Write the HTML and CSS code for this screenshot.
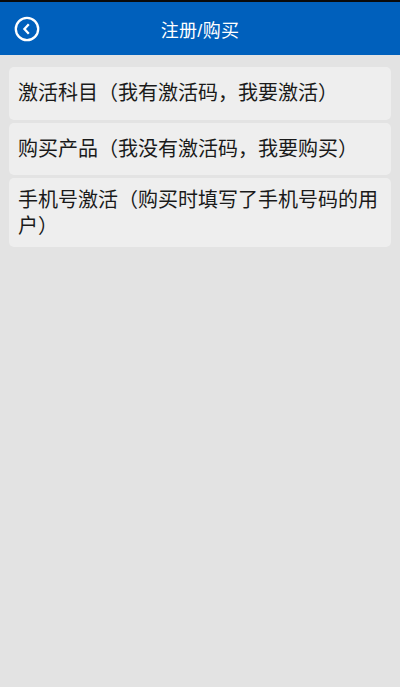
FILE: index.html
```html
<!DOCTYPE html>
<html lang="zh-CN">
<head>
    <meta charset="UTF-8">
    <title>注册/购买</title>

    <link rel="stylesheet" href="styles.css">

</head>
<body>

<div class="header">
    <div class="back">
        <svg width="26" height="26" viewBox="0 0 26 26">
            <circle cx="13" cy="13" r="11.2" fill="none" stroke="#fff" stroke-width="2.3"/>
            <path d="M14.8 8.2 L10.4 13 L14.8 17.8" fill="none" stroke="#fff" stroke-width="2.3"/>
        </svg>
    </div>
    <div class="title">注册/购买</div>
</div>

<div class="list">
    <div class="item">激活科目（我有激活码，我要激活）</div>
    <div class="item">购买产品（我没有激活码，我要购买）</div>
    <div class="item">手机号激活（购买时填写了手机号码的用户）</div>
</div>

</body>
</html>
```

FILE: styles.css
```css
html, body {
    height: 100%;
}

body {
    margin: 0;
    background-color: #e3e3e3;
    font-family: "Liberation Sans", "Noto Sans CJK SC", sans-serif;
    border-top: 2px solid #0a0a0a;
    box-sizing: border-box;
}

.header {
    display: flex;
    align-items: center;
    justify-content: center;
    position: relative;
    height: 53px;
    background-color: #0060bc;
}

.back {
    position: absolute;
    left: 14px;
    top: 14px;
    width: 26px;
    height: 26px;
}

.title {
    color: #fff;
    font-size: 18px;
    letter-spacing: 0.3px;
}

.list {
    display: flex;
    flex-direction: column;
    gap: 3px;
    padding: 12px 9px;
}

.item {
    display: flex;
    align-items: center;
    box-sizing: border-box;
    min-height: 52.5px;
    padding: 8.5px 9px;
    background-color: #eeeeee;
    border-radius: 5px;
    color: #1a1a1a;
    font-size: 20px;
    line-height: 26px;
}
```
